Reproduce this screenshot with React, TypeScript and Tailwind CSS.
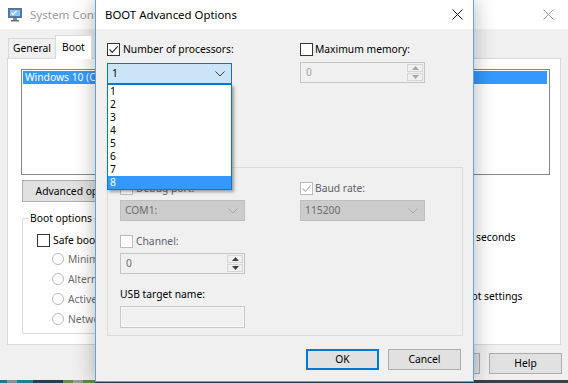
import React from 'react';

function Check({ checked, disabled }: { checked?: boolean; disabled?: boolean }) {
  return (
    <span
      className={`flex h-[13px] w-[13px] shrink-0 items-center justify-center border bg-white ${
        disabled ? 'border-[#bcbcbc]' : 'border-[#333333]'
      }`}
    >
      {checked && (
        <svg width="11" height="11" viewBox="0 0 11 11">
          <path
            d="M1.5 5.5 L4.3 8.3 L9.7 2.4"
            fill="none"
            stroke={disabled ? '#bcbcbc' : '#333333'}
            strokeWidth="1.2"
          />
        </svg>
      )}
    </span>
  );
}

function Radio({ label }: { label: string }) {
  return (
    <div className="flex h-[20px] items-center gap-[4px] pl-[15px] text-[#6d6d6d]">
      <span className="h-[12px] w-[12px] shrink-0 rounded-full border border-[#bcbcbc] bg-white" />
      <span className="whitespace-nowrap">{label}</span>
    </div>
  );
}

function Chevron({ color }: { color: string }) {
  return (
    <svg width="10" height="6" viewBox="0 0 10 6">
      <path d="M0.5 0.5 L5 5 L9.5 0.5" fill="none" stroke={color} strokeWidth="1" />
    </svg>
  );
}

function Arrow({ up, color }: { up?: boolean; color: string }) {
  return (
    <svg width="7" height="4" viewBox="0 0 7 4">
      <path d={up ? 'M0 4 L3.5 0 L7 4 Z' : 'M0 0 L3.5 4 L7 0 Z'} fill={color} />
    </svg>
  );
}

function Spin({ value, dim }: { value: string; dim?: boolean }) {
  const arrow = dim ? '#a6a6a6' : '#404040';
  return (
    <div className="flex h-[21px] w-[125px] items-stretch border border-[#c4c4c4] bg-[#f0f0f0]">
      <span className={`flex flex-1 items-center pl-[5px] ${dim ? 'text-[#a4a0b0]' : 'text-[#6d6d6d]'}`}>
        {value}
      </span>
      <div className="flex w-[17px] flex-col gap-px py-px pr-px">
        <div className="flex flex-1 items-center justify-center border border-[#d6d6d6]">
          <Arrow up color={arrow} />
        </div>
        <div className="flex flex-1 items-center justify-center border border-[#d6d6d6]">
          <Arrow color={arrow} />
        </div>
      </div>
    </div>
  );
}

function DisabledCombo({ value }: { value: string }) {
  return (
    <div className="flex h-[21px] w-[125px] items-center justify-between border border-[#bfbfbf] bg-[#cccccc] pl-[4px] pr-[6px] text-[#6d6d6d]">
      <span>{value}</span>
      <Chevron color="#a8a8a8" />
    </div>
  );
}

function WinButton({ label, focused }: { label: string; focused?: boolean }) {
  return (
    <div
      className={`flex h-[21px] w-[73px] items-center justify-center bg-[#e1e1e1] ${
        focused ? 'border-2 border-[#0078d7]' : 'border border-[#adadad]'
      }`}
    >
      {label}
    </div>
  );
}

function MsconfigIcon() {
  return (
    <svg width="16" height="15" viewBox="0 0 16 15" className="ml-[7px]">
      <rect x="1.5" y="1.5" width="13" height="9" fill="#3f7fc6" stroke="#6e6e6e" />
      <rect x="3" y="3" width="10" height="6" fill="#8cc4f0" />
      <path d="M4.5 6 L6 7.5 L9.5 4" fill="none" stroke="#ffffff" strokeWidth="1.2" />
      <rect x="6" y="11" width="4" height="2" fill="#8a8a8a" />
      <rect x="4" y="13" width="8" height="1.5" fill="#6e6e6e" />
    </svg>
  );
}

function CloseX({ color }: { color: string }) {
  return (
    <svg width="11" height="11" viewBox="0 0 11 11">
      <path d="M0.5 0.5 L10.5 10.5 M10.5 0.5 L0.5 10.5" stroke={color} strokeWidth="1" />
    </svg>
  );
}

export default function App() {
  const processors = ['1', '2', '3', '4', '5', '6', '7', '8'];

  return (
    <div className="relative h-[383px] w-[568px] overflow-hidden bg-[#f0f0f0] font-['Noto_Sans',sans-serif] text-[10.3px] leading-[13px] text-black">
      {/* System Configuration window (behind) */}
      <div className="flex h-full flex-col">
        <div className="flex h-[29px] shrink-0 items-center bg-white">
          <MsconfigIcon />
          <span className="ml-[7px] text-[11.6px] text-[#9a9a9a]">System Configuration</span>
          <div className="ml-auto mr-[14px]">
            <CloseX color="#9a9a9a" />
          </div>
        </div>

        {/* Tabs */}
        <div className="flex h-[29px] shrink-0 items-end pl-[8px]">
          <div className="flex h-[20px] items-center border border-b-0 border-[#d9d9d9] bg-[#f0f0f0] px-[4px]">
            General
          </div>
          <div className="relative z-10 -mb-px -ml-px flex h-[24px] items-center border border-b-0 border-[#d9d9d9] bg-white px-[6px]">
            Boot
          </div>
        </div>

        {/* Boot page */}
        <div className="ml-[7px] flex h-[287px] w-[554px] shrink-0 flex-col border border-[#d9d9d9] bg-white pl-[13px] pt-[10px]">
          <div className="h-[106px] w-[529px] border border-[#828790] p-px">
            <div className="flex h-[13px] w-[524px] items-center bg-[#3399ff] pl-[2px] text-white">
              Windows 10 (C:\WINDOWS) : Current OS; Default OS
            </div>
          </div>

          <div className="ml-[1px] mt-[5px] flex h-[22px] w-[122px] items-center justify-center border border-[#adadad] bg-[#e1e1e1]">
            Advanced options...
          </div>

          <div className="mt-[9px] flex items-start">
            <fieldset className="ml-[1px] h-[123px] w-[300px] border border-[#dcdcdc] pl-[14px]">
              <legend className="-ml-[8px] px-[1px] leading-[14px]">Boot options</legend>
              <div className="mt-[9px] flex h-[13px] items-center gap-[3px]">
                <Check />
                <span>Safe boot</span>
              </div>
              <div className="mt-[2px]">
                <Radio label="Minimal" />
                <Radio label="Alternate shell" />
                <Radio label="Active Directory repair" />
                <Radio label="Network" />
              </div>
            </fieldset>

            <div className="ml-[18px] flex flex-col">
              <div className="mt-[16px] flex h-[20px] items-center">
                <span className="w-[88px]">Timeout:</span>
                <div className="h-[20px] w-[44px] border border-[#7a7a7a] pl-[3px]">30</div>
                <span className="ml-[4px]">seconds</span>
              </div>
              <div className="ml-[60px] mt-[43px] flex items-start gap-[3px]">
                <Check />
                <span className="w-[108px]">Make all boot settings permanent</span>
              </div>
            </div>
          </div>
        </div>

        <div className="mt-[8px] flex shrink-0 justify-end gap-[9px] pr-[6px]">
          <WinButton label="OK" />
          <WinButton label="Cancel" />
          <WinButton label="Apply" />
          <WinButton label="Help" />
        </div>

        {/* desktop peeking below */}
        <div className="mt-auto flex h-[3px] shrink-0">
          <div className="w-[7px] bg-[#1f7a8c]" />
          <div className="w-[10px] bg-[#8a8f94]" />
          <div className="w-[16px] bg-[#267f92]" />
          <div className="w-[30px] bg-[#2b3c52]" />
          <div className="w-[10px] bg-[#6b8a4c]" />
          <div className="w-[10px] bg-[#9a9a9a]" />
          <div className="w-[12px] bg-[#5e8a44]" />
          <div className="flex-1 bg-[#3a3f48]" />
        </div>
      </div>

      {/* BOOT Advanced Options dialog */}
      <div className="absolute left-[95px] top-0 flex h-[382px] w-[379px] flex-col border-x border-b border-[#5da5e2] bg-[#f0f0f0] shadow-[0_0_20px_rgba(0,0,0,0.3)]">
        <div className="flex h-[29px] shrink-0 items-center justify-between bg-white pl-[9px] pr-[10px]">
          <span className="text-[11.4px]">BOOT Advanced Options</span>
          <CloseX color="#111111" />
        </div>

        <div className="flex flex-col pl-[11px] pt-[14px]">
          <div className="flex">
            <div className="flex w-[193px] flex-col">
              <div className="flex h-[13px] items-center gap-[3px]">
                <Check checked />
                <span>Number of processors:</span>
              </div>
              <div className="mt-[7px] flex h-[21px] w-[125px] items-center justify-between border border-[#0078d7] bg-[#cce4f7] pl-[4px] pr-[6px]">
                <span>1</span>
                <Chevron color="#404040" />
              </div>
            </div>
            <div className="flex flex-col">
              <div className="flex h-[13px] items-center gap-[2px]">
                <Check />
                <span>Maximum memory:</span>
              </div>
              <div className="mt-[6px]">
                <Spin value="0" dim />
              </div>
            </div>
          </div>

          <fieldset className="mt-[76px] h-[176px] w-[356px] border border-[#dcdcdc] pl-[12px]">
            <legend className="-ml-[6px] px-[1px] leading-[14px]">Debug settings</legend>
            <div className="mt-[8px] flex">
              <div className="flex w-[180px] items-center gap-[3px] text-[#6d6d6d]">
                <Check disabled />
                <span>Debug port:</span>
              </div>
              <div className="flex items-center gap-[2px] text-[#5f5f6a]">
                <Check checked disabled />
                <span>Baud rate:</span>
              </div>
            </div>
            <div className="mt-[5px] flex">
              <div className="w-[180px]">
                <DisabledCombo value="COM1:" />
              </div>
              <DisabledCombo value="115200" />
            </div>
            <div className="mt-[14px] flex h-[13px] items-center gap-[3px] text-[#5f5f6a]">
              <Check disabled />
              <span>Channel:</span>
            </div>
            <div className="mt-[5px]">
              <Spin value="0" />
            </div>
            <div className="mt-[14px] h-[13px]">USB target name:</div>
            <div className="mt-[5px] h-[22px] w-[125px] border border-[#c8c8c8] bg-[#f0f0f0] shadow-[inset_0_0_0_1px_#f7f7f7]" />
          </fieldset>

          <div className="mt-[13px] flex justify-end gap-[9px] pr-[12px]">
            <WinButton label="OK" focused />
            <WinButton label="Cancel" />
          </div>
        </div>
      </div>

      {/* open processor list */}
      <div className="absolute left-[107px] top-[84px] w-[125px] border border-[#0078d7] bg-white shadow-[2px_2px_3px_rgba(0,0,0,0.35)]">
        {processors.map((p) => (
          <div
            key={p}
            className={`flex h-[13px] items-center pl-[2px] ${p === '8' ? 'bg-[#3399ff] text-white' : ''}`}
          >
            {p}
          </div>
        ))}
      </div>
    </div>
  );
}
